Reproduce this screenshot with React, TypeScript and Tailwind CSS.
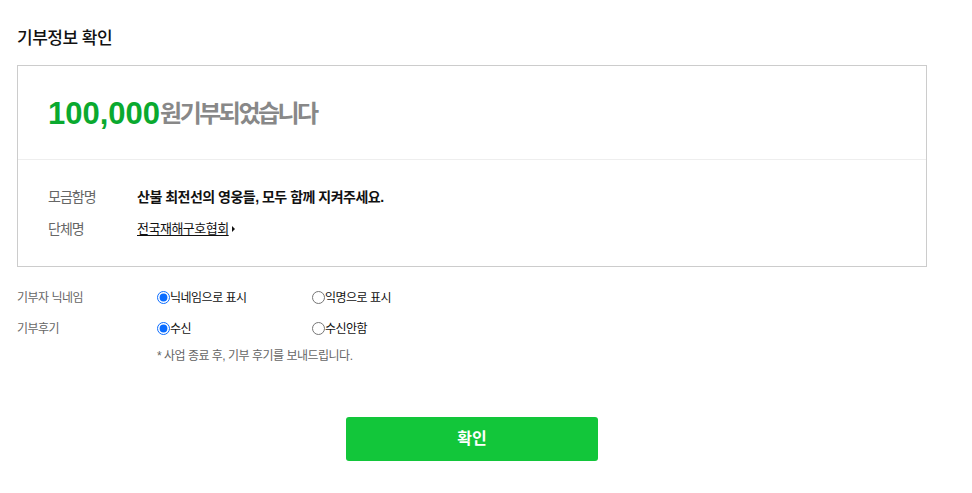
import React from 'react';

const font = "font-['Liberation_Sans','Noto_Sans_CJK_KR',sans-serif]";

function InfoRow({ label, children }: { label: string; children: React.ReactNode }) {
  return (
    <div className="flex items-center h-[32px]">
      <div className="w-[89px] text-[14px] text-[#666] tracking-[-1px]">{label}</div>
      <div className="flex items-center">{children}</div>
    </div>
  );
}

function RadioRow({
  label,
  name,
  options,
}: {
  label: string;
  name: string;
  options: string[];
}) {
  return (
    <div className="flex items-center h-[31px]">
      <div className="w-[140px] text-[12px] text-[#666] tracking-[-0.5px]">{label}</div>
      {options.map((opt, i) => (
        <label key={opt} className="flex items-center w-[155px] cursor-pointer">
          <input
            type="radio"
            name={name}
            defaultChecked={i === 0}
            className="m-0 w-[13px] h-[13px] accent-[#0a6cff]"
          />
          <span className="text-[12px] text-[#111] tracking-[-0.5px]">{opt}</span>
        </label>
      ))}
    </div>
  );
}

export default function App() {
  return (
    <div className={`min-h-screen bg-white ${font}`}>
      <div className="w-[910px] ml-[17px] pt-[29px]">
        <h2 className="text-[17px] leading-[20px] font-medium text-[#111] tracking-[-0.5px]">기부정보 확인</h2>

        <div className="mt-[16px] border border-[#cccccc]">
          <div className="h-[94px] flex items-center pl-[30px] pt-[2px] border-b border-[#eeeeee]">
            <span className="text-[31px] font-bold text-[#0aa92f] leading-none">100,000</span>
            <span className="text-[24px] font-bold text-[#888888] tracking-[-2.5px] leading-none">원기부되었습니다</span>
          </div>
          <div className="pl-[30px] pt-[21px] pb-[21px]">
            <InfoRow label="모금함명">
              <span className="text-[14px] font-bold text-[#111] tracking-[-0.5px]">
                산불 최전선의 영웅들, 모두 함께 지켜주세요.
              </span>
            </InfoRow>
            <InfoRow label="단체명">
              <a href="#" className="text-[13px] text-[#111] underline underline-offset-2 tracking-[-0.5px]">
                전국재해구호협회
              </a>
              <span className="ml-[3px] w-0 h-0 border-y-[3px] border-y-transparent border-l-[3px] border-l-[#111]" />
            </InfoRow>
          </div>
        </div>

        <div className="mt-[15px]">
          <RadioRow label="기부자 닉네임" name="nickname" options={['닉네임으로 표시', '익명으로 표시']} />
          <RadioRow label="기부후기" name="review" options={['수신', '수신안함']} />
          <div className="h-[23px] flex items-center pl-[140px] pt-[1px] text-[12px] text-[#666] tracking-[-0.5px]">
            * 사업 종료 후, 기부 후기를 보내드립니다.
          </div>
        </div>

        <div className="mt-[50px] flex justify-center">
          <button className="w-[252px] h-[44px] rounded-[3px] bg-[#12c63a] text-white text-[16px] font-bold">
            확인
          </button>
        </div>
      </div>
    </div>
  );
}
